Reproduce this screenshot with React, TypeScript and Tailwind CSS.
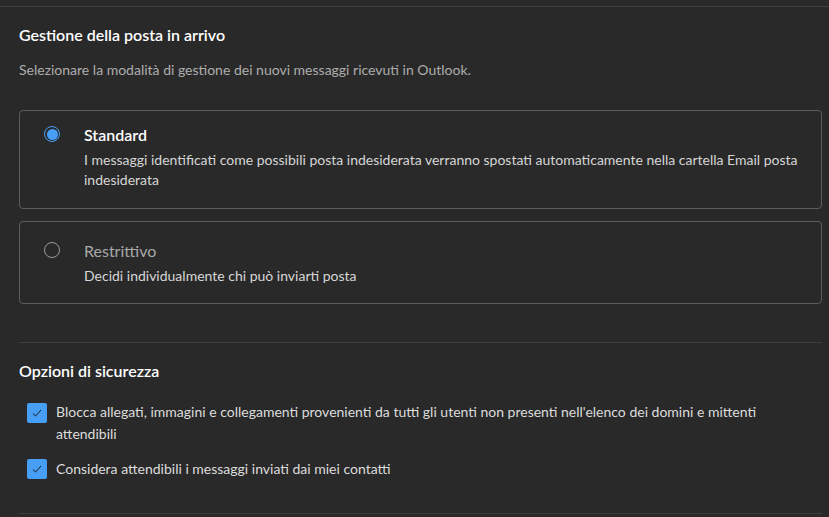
import React from 'react';

const font = { fontFamily: 'Lato, "Open Sans", sans-serif' };

function Radio({ checked }: { checked: boolean }) {
  if (checked) {
    return (
      <span className="mt-[2px] flex h-4 w-4 shrink-0 items-center justify-center rounded-full border border-[#479ef5]">
        <span className="h-[11px] w-[11px] rounded-full bg-[#479ef5]" />
      </span>
    );
  }
  return <span className="mt-[2px] h-4 w-4 shrink-0 rounded-full border border-[#9a9a9a]" />;
}

function Checkbox() {
  return (
    <span className="flex h-5 w-5 shrink-0 items-center justify-center rounded-[2px] bg-[#479ef5]">
      <svg width="12" height="12" viewBox="0 0 12 12" fill="none">
        <path d="M2 6.5 L4.6 9 L10 3" stroke="#1b1b1b" strokeWidth="1" />
      </svg>
    </span>
  );
}

export default function App() {
  return (
    <div className="h-[517px] w-full overflow-hidden bg-[#292929] text-[14px] text-white" style={font}>
      <div className="h-[6px]" />
      <div className="h-px bg-[#3e3e3e]" />

      <div className="pl-[19px] pr-[7px]">
        {/* Inbox handling */}
        <h2 className="mt-[17px] text-[16px] font-semibold leading-[22px] text-white">
          Gestione della posta in arrivo
        </h2>
        <p className="mt-[14px] leading-5 text-[#adadad]">
          Selezionare la modalità di gestione dei nuovi messaggi ricevuti in Outlook.
        </p>

        <div className="mt-[30px] flex gap-6 rounded border border-[#5c5c5c] pl-6 pr-3 pt-[13px] pb-[18px]">
          <Radio checked />
          <div>
            <div className="text-[16px] font-semibold leading-[22px] text-white">Standard</div>
            <div className="mt-1 leading-5 text-[#d6d6d6]">
              I messaggi identificati come possibili posta indesiderata verranno spostati automaticamente nella cartella Email posta indesiderata
            </div>
          </div>
        </div>

        <div className="mt-3 flex gap-6 rounded border border-[#5c5c5c] pl-6 pr-3 pt-[18px] pb-[17px]">
          <Radio checked={false} />
          <div>
            <div className="text-[16px] leading-[22px] text-[#a8a8a8]">Restrittivo</div>
            <div className="mt-1 leading-5 text-[#d6d6d6]">Decidi individualmente chi può inviarti posta</div>
          </div>
        </div>

        <div className="mt-[38px] h-px bg-[#3e3e3e]" />

        {/* Security options */}
        <h2 className="mt-[17px] text-[16px] font-semibold leading-[22px] text-white">Opzioni di sicurezza</h2>

        <div className="mt-[19px] ml-2 mr-10 flex items-start gap-[9px]">
          <span className="mt-[2px]">
            <Checkbox />
          </span>
          <span className="leading-[22px] text-[#dcdcdc]">
            Blocca allegati, immagini e collegamenti provenienti da tutti gli utenti non presenti nell'elenco dei domini e mittenti attendibili
          </span>
        </div>

        <div className="mt-[13px] ml-2 mr-10 flex items-start gap-[9px]">
          <span className="mt-px">
            <Checkbox />
          </span>
          <span className="leading-[22px] text-[#dcdcdc]">
            Considera attendibili i messaggi inviati dai miei contatti
          </span>
        </div>

        <div className="mt-[33px] h-px bg-[#3e3e3e]" />
      </div>
    </div>
  );
}
